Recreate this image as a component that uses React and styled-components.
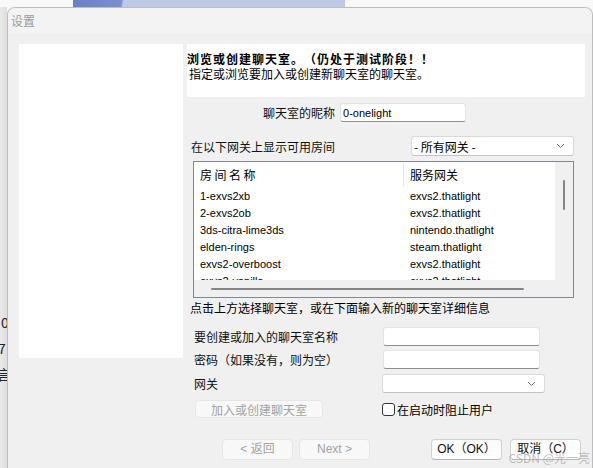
import React from "react";
import styled, { createGlobalStyle } from "styled-components";

const GlobalStyle = createGlobalStyle`
  html, body { margin: 0; padding: 0; }
  body {
    width: 593px; height: 468px; overflow: hidden;
    font-family: "Noto Sans CJK SC", "Liberation Sans", sans-serif;
    font-size: 12px; color: #000;
    text-spacing-trim: space-all;
  }
  * { box-sizing: border-box; }
`;

const Desktop = styled.div`
  position: relative;
  width: 593px;
  height: 468px;
  overflow: hidden;
  display: grid;
  grid-template-columns: 7px 1fr;
  grid-template-rows: 7px 1fr;
  background: #f8f8f8;
`;

const TopStrip = styled.div`
  grid-column: 1 / 3;
  display: flex;
  padding-left: 73px;
`;

const BgWindow = styled.div`
  width: 272px;
  height: 7px;
  background: linear-gradient(100deg, #6a80c4 0, #7a8fcd 48px, #bccae7 50px, #bccae7 100%);
`;

const LeftStrip = styled.div`
  background: linear-gradient(to right, #e9e9e9, #dedede);
  overflow: hidden;
  padding-top: 302px;
  display: flex;
  flex-direction: column;
  font-size: 14px;
  line-height: 26px;
  color: #222;
`;

const Glyph = styled.span`
  display: block;
  margin-left: ${(p) => p.$shift || 0}px;
  white-space: nowrap;
`;

const Dialog = styled.div`
  background: #f0f0f0;
  border: 1px solid #bdbdbd;
  border-bottom: none;
  border-radius: 8px 8px 0 0;
  width: 586px;
  display: flex;
  flex-direction: column;
  overflow: hidden;
`;

const TitleBar = styled.div`
  height: 25px;
  background: #f3f3f3;
  display: flex;
  align-items: center;
  padding-left: 3px;
  color: #9a9a9a;
  font-size: 12px;
`;

const Body = styled.div`
  display: flex;
  gap: 4px;
  padding: 11px 0 0 11px;
`;

const LeftPanel = styled.div`
  width: 164px;
  height: 314px;
  background: #fff;
  flex-shrink: 0;
`;

const RightCol = styled.div`
  width: 398px;
  display: flex;
  flex-direction: column;
`;

const Header = styled.div`
  background: #fff;
  height: 53px;
  padding-top: 7px;
`;

const HeaderTitle = styled.div`
  font-weight: 700;
  line-height: 15px;
  letter-spacing: 1px;
  white-space: nowrap;
`;

const HeaderSub = styled.div`
  line-height: 15px;
  padding-left: 2px;
`;

const Label = styled.span`
  line-height: 15px;
  white-space: nowrap;
  color: #111;
  padding-left: ${(p) => p.$indent || 0}px;
`;

const NickRow = styled.div`
  margin-top: 6px;
  height: 19px;
  display: flex;
  align-items: center;
  gap: 5px;
  padding-left: 76px;
`;

const TextInput = styled.input`
  width: ${(p) => p.$w}px;
  height: 19px;
  margin: 0 0 0 ${(p) => p.$ml || 0}px;
  border: 1px solid #e3e3e3;
  border-bottom-color: #8e8e8e;
  border-radius: 3px;
  background: #fff;
  padding: 0 2px;
  font-family: "Liberation Sans", "Noto Sans CJK SC", sans-serif;
  font-size: 11px;
  color: #000;
  outline: none;
`;

const GatewayRow = styled.div`
  margin-top: 14px;
  height: 20px;
  display: grid;
  grid-template-columns: 224px 163px;
  align-items: center;
`;

const Select = styled.div`
  width: 163px;
  height: ${(p) => p.$h || 20}px;
  background: #fff;
  border: 1px solid #d9d9d9;
  border-bottom-color: #c2c2c2;
  border-radius: 3px;
  display: flex;
  align-items: center;
  justify-content: space-between;
  padding: 0 8px 0 2px;
  line-height: 15px;
`;

const ListBox = styled.div`
  margin: 5px 0 0 6px;
  width: 381px;
  height: 137px;
  border: 1px solid #828790;
  background: #fff;
  display: grid;
  grid-template-columns: 1fr 18px;
  grid-template-rows: 1fr 17px;
`;

const ListContent = styled.div`
  overflow: hidden;
`;

const ListHeader = styled.div`
  height: 26px;
  display: grid;
  grid-template-columns: 209px 1fr;
  align-items: stretch;
`;

const HeadCell = styled.div`
  display: flex;
  align-items: center;
  padding-left: 6px;
  letter-spacing: ${(p) => p.$ls || 0}px;
  border-left: ${(p) => (p.$divider ? "1px solid #e5e5e5" : "none")};
  margin: 1px 0 2px;
`;

const ListRow = styled.div`
  height: 17px;
  display: grid;
  grid-template-columns: 209px 1fr;
  font-family: "Liberation Sans", sans-serif;
  font-size: 11px;
  line-height: 17px;
  color: #000;
`;

const Cell = styled.div`
  padding-left: ${(p) => p.$pl}px;
  white-space: nowrap;
`;

const VScroll = styled.div`
  background: #f0f0f0;
  display: flex;
  flex-direction: column;
  align-items: center;
  padding-top: 18px;
`;

const VThumb = styled.div`
  width: 2px;
  height: 30px;
  background: #858585;
  border-radius: 1px;
`;

const HScroll = styled.div`
  background: #f0f0f0;
  display: flex;
  align-items: center;
  padding-left: 17px;
`;

const HThumb = styled.div`
  width: 313px;
  height: 2px;
  background: #858585;
  border-radius: 1px;
`;

const Corner = styled.div`
  background: #f0f0f0;
`;

const Hint = styled.div`
  margin-top: 2px;
  padding-left: 3px;
  line-height: 15px;
`;

const FormRow = styled.div`
  margin-top: ${(p) => p.$mt}px;
  height: ${(p) => p.$h || 19}px;
  display: grid;
  grid-template-columns: 195px 1fr;
  align-items: center;
`;

const JoinButton = styled.button`
  margin-left: 8px;
  width: 128px;
  height: 18px;
  border: 1px solid #e6e6e6;
  border-radius: 4px;
  background: #f8f8f8;
  color: #a2a2a2;
  font-family: "Noto Sans CJK SC", sans-serif;
  font-size: 12px;
  padding: 0;
  line-height: 15px;
`;

const CheckWrap = styled.label`
  display: flex;
  align-items: center;
  gap: 2px;
`;

const CheckBox = styled.span`
  width: 13px;
  height: 13px;
  border: 1px solid #333;
  border-radius: 3px;
  background: #fff;
`;

const Footer = styled.div`
  margin-top: 21px;
  display: flex;
  align-items: center;
  gap: 6px;
  padding: 0 4px 0 35px;
`;

const Spacer = styled.div`
  flex: 1;
`;

const DlgButton = styled.button`
  width: 71px;
  height: 21px;
  margin-left: ${(p) => p.$ml || 0}px;
  border: 1px solid ${(p) => (p.$disabled ? "#e6e6e6" : "#d0d0d0")};
  border-bottom-color: ${(p) => (p.$disabled ? "#e6e6e6" : "#b5b5b5")};
  border-radius: 4px;
  background: ${(p) => (p.$disabled ? "#f8f8f8" : "#fdfdfd")};
  color: ${(p) => (p.$disabled ? "#a2a2a2" : "#111")};
  font-family: "Liberation Sans", "Noto Sans CJK SC", sans-serif;
  font-size: 12px;
  padding: 0;
  line-height: 15px;
`;

const Watermark = styled.div`
  position: absolute;
  right: 3px;
  bottom: 3px;
  color: rgba(150, 150, 150, 0.6);
  font-size: 12px;
  line-height: 14px;
  pointer-events: none;
`;

const Chevron = () => (
  <svg width="9" height="6" viewBox="0 0 9 6" aria-hidden="true">
    <path d="M1 1 L4.5 4.5 L8 1" fill="none" stroke="#6b6b6b" strokeWidth="1" />
  </svg>
);

const rooms = [
  ["1-exvs2xb", "exvs2.thatlight"],
  ["2-exvs2ob", "exvs2.thatlight"],
  ["3ds-citra-lime3ds", "nintendo.thatlight"],
  ["elden-rings", "steam.thatlight"],
  ["exvs2-overboost", "exvs2.thatlight"],
  ["exvs2-vanilla", "exvs2.thatlight"],
];

export default function App() {
  return (
    <>
      <GlobalStyle />
      <Desktop>
        <TopStrip>
          <BgWindow />
        </TopStrip>
        <LeftStrip>
          <Glyph $shift={1}>0</Glyph>
          <Glyph $shift={-2}>7</Glyph>
          <Glyph $shift={-3}>言</Glyph>
        </LeftStrip>
        <Dialog>
          <TitleBar>设置</TitleBar>
          <Body>
            <LeftPanel />
            <RightCol>
              <Header>
                <HeaderTitle>浏览或创建聊天室。（仍处于测试阶段！！</HeaderTitle>
                <HeaderSub>指定或浏览要加入或创建新聊天室的聊天室。</HeaderSub>
              </Header>
              <NickRow>
                <Label>聊天室的昵称</Label>
                <TextInput $w={126} defaultValue="0-onelight" />
              </NickRow>
              <GatewayRow>
                <Label $indent={4}>在以下网关上显示可用房间</Label>
                <Select>
                  <span>- 所有网关 -</span>
                  <Chevron />
                </Select>
              </GatewayRow>
              <ListBox>
                <ListContent>
                  <ListHeader>
                    <HeadCell $ls={2.5}>房间名称</HeadCell>
                    <HeadCell $divider>服务网关</HeadCell>
                  </ListHeader>
                  {rooms.map(([name, gw]) => (
                    <ListRow key={name}>
                      <Cell $pl={6}>{name}</Cell>
                      <Cell $pl={7}>{gw}</Cell>
                    </ListRow>
                  ))}
                </ListContent>
                <VScroll>
                  <VThumb />
                </VScroll>
                <HScroll>
                  <HThumb />
                </HScroll>
                <Corner />
              </ListBox>
              <Hint>点击上方选择聊天室，或在下面输入新的聊天室详细信息</Hint>
              <FormRow $mt={12}>
                <Label $indent={7}>要创建或加入的聊天室名称</Label>
                <TextInput $w={157} $ml={1} />
              </FormRow>
              <FormRow $mt={4}>
                <Label $indent={7}>密码（如果没有，则为空）</Label>
                <TextInput $w={157} $ml={1} type="password" />
              </FormRow>
              <FormRow $mt={5}>
                <Label $indent={7}>网关</Label>
                <Select $h={19}>
                  <span />
                  <Chevron />
                </Select>
              </FormRow>
              <FormRow $mt={7} $h={18}>
                <JoinButton disabled>加入或创建聊天室</JoinButton>
                <CheckWrap>
                  <CheckBox />
                  <span>在启动时阻止用户</span>
                </CheckWrap>
              </FormRow>
              <Footer>
                <DlgButton $disabled>{"< 返回"}</DlgButton>
                <DlgButton $disabled>{"Next >"}</DlgButton>
                <Spacer />
                <DlgButton>OK（OK）</DlgButton>
                <DlgButton $ml={2}>取消（C）</DlgButton>
              </Footer>
            </RightCol>
          </Body>
        </Dialog>
        <Watermark>CSDN @光一亮</Watermark>
      </Desktop>
    </>
  );
}
